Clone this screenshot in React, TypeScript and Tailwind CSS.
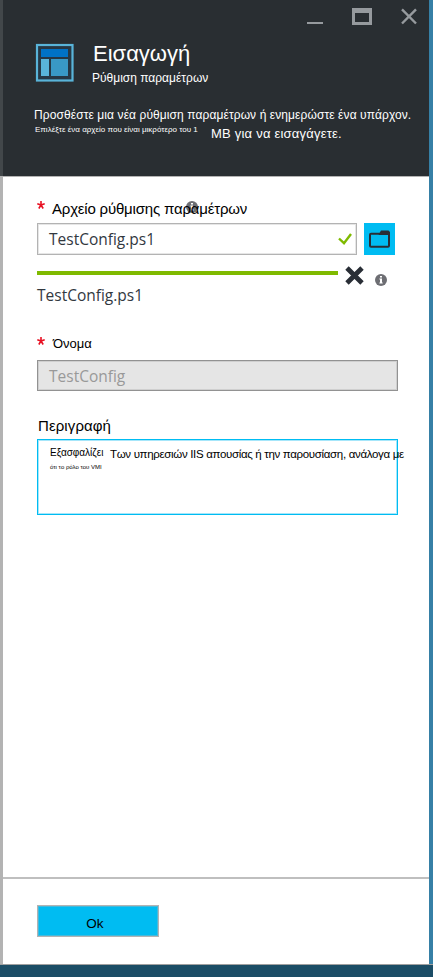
import React from "react";

function WindowControls() {
  return (
    <div className="flex h-[36px] items-start justify-end gap-[29px] pr-[12px] pt-[8px]">
      <span className="mt-[14px] h-[2px] w-[16px] bg-[#969a9e]" />
      <span className="h-[17px] w-[20px] border-[3px] border-t-[5px] border-[#969a9e]" />
      <svg className="h-[17px] w-[16px]" viewBox="0 0 16 17" fill="none" stroke="#969a9e" strokeWidth="2.4">
        <path d="M1 1.3 15 15.5M15 1.3 1 15.5" />
      </svg>
    </div>
  );
}

function SettingsLogo() {
  return (
    <svg className="mt-[7px] h-[39px] w-[39px] shrink-0" viewBox="0 0 39 39">
      <rect x="2" y="2" width="35.5" height="35.5" fill="#263744" stroke="#59b4d9" strokeWidth="2.2" />
      <rect x="6" y="6" width="27" height="8" fill="#0072c6" />
      <rect x="6" y="16" width="8" height="17" fill="#59b4d9" />
      <rect x="16" y="16" width="17" height="17" fill="#3999c6" />
    </svg>
  );
}

function Info({ className }: { className: string }) {
  return (
    <svg className={className} viewBox="0 0 12 12">
      <circle cx="6" cy="6" r="6" fill="#6d6e73" />
      <path d="M5 2h2v1.5H5zM4.4 4.6H7V8.6h.7v1H4.4v-1H5V5.6h-.6z" fill="#fff" />
    </svg>
  );
}

function Required({ className }: { className: string }) {
  return (
    <svg className={className} viewBox="0 0 8 8" stroke="#e81123" strokeWidth="1.6">
      <path d="M4 4V0M4 4 .3 2.8M4 4l3.7-1.2M4 4 1.8 7.5M4 4l2.2 3.5" />
    </svg>
  );
}

export default function App() {
  return (
    <div className="flex h-[977px] w-[433px] flex-col overflow-hidden whitespace-nowrap bg-[#1b4d66] font-['Liberation_Sans',Arial,sans-serif] text-black">
      <div className="flex h-[964px]">
        <div className="flex w-[3px] flex-col">
          <div className="h-[176px] bg-[#42474a]" />
          <div className="flex-1 bg-[#b3b3b3]" />
        </div>
        <div className="flex w-[426px] flex-col bg-white">
          <header className="h-[177px] border-b border-[#b3b3b3] bg-[#292e32] text-white">
            <WindowControls />
            <div className="flex h-[68px] pl-[32px]">
              <SettingsLogo />
              <div className="ml-[18px]">
                <h1 className="ml-px mt-[4px] h-[28px] text-[22px] leading-[28px]">Εισαγωγή</h1>
                <p className="mt-[2px] h-[16px] text-[12px] leading-[16px]">Ρύθμιση παραμέτρων</p>
              </div>
            </div>
            <p className="ml-[31px] mt-[3px] h-[16px] text-[12px] leading-[16px] tracking-[0.09px]">
              Προσθέστε μια νέα ρύθμιση παραμέτρων ή ενημερώστε ένα υπάρχον.
            </p>
            <div className="ml-[32px] flex">
              <p className="mt-px h-[12px] w-[176px] text-[8px] leading-[12px]">Επιλέξτε ένα αρχείο που είναι μικρότερο του 1</p>
              <p className="mt-[3px] h-[16px] text-[13px] leading-[16px] tracking-[0.22px]">MB για να εισαγάγετε.</p>
            </div>
          </header>

          <main className="h-[700px] pl-[34px] pt-[22px]">
            <div className="relative flex h-[24px]">
              <Required className="mt-[2px] h-[8px] w-[8px]" />
              <Info className="absolute left-[149px] top-[2px] h-[12px] w-[12px]" />
              <label className="relative ml-[7px] h-[20px] text-[15px] leading-[20px] tracking-[-0.19px]">Αρχείο ρύθμισης παραμέτρων</label>
            </div>
            <div className="flex h-[32px] gap-[7px]">
              <div className="flex w-[320px] items-center justify-between border border-[#b3b3b3] pl-[11px] pr-[4px] font-['Open_Sans','Noto_Sans',sans-serif] text-[15.5px] leading-[20px] text-[#32383f] shadow-[inset_0_0_0_1px_#e6e6e6]">
                <span>TestConfig.ps1</span>
                <svg className="h-[12px] w-[14px]" viewBox="0 0 14 12" fill="none" stroke="#7fba00" strokeWidth="2.4">
                  <path d="m1 5.5 5 4.7L13 1" />
                </svg>
              </div>
              <div className="flex w-[31px] items-center justify-center bg-[#00bcf2]">
                <svg className="h-[18px] w-[21px]" viewBox="0 0 21 18">
                  <rect x="1" y="3.7" width="19" height="13" rx="1" fill="#00bcf2" stroke="#292e36" strokeWidth="2" />
                  <path d="M10 4 12 .5h7.5L21 2v3H9.5z" fill="#292e36" />
                </svg>
              </div>
            </div>
            <div className="flex h-[30px] pt-[11px]">
              <div className="mt-[5px] h-[4px] w-[301px] bg-[#7fba00]" />
              <svg className="ml-[7px] h-[19px] w-[19px]" viewBox="0 0 19 19" stroke="#292e36" strokeWidth="4.8">
                <path d="m2 2 15 15M17 2 2 17" />
              </svg>
              <Info className="ml-[11px] mt-[8px] h-[12px] w-[12px]" />
            </div>
            <p className="h-[20px] font-['Open_Sans','Noto_Sans',sans-serif] text-[15.5px] leading-[20px] text-[#32383f]">TestConfig.ps1</p>

            <div className="mt-[30px] flex h-[25px]">
              <Required className="mt-[2px] h-[8px] w-[8px]" />
              <label className="ml-[8px] mt-px h-[16px] text-[13px] leading-[16px]">Όνομα</label>
            </div>
            <div className="flex h-[31px] w-[361px] items-center border border-[#929292] bg-[#e5e5e5] pl-[11px] font-['Open_Sans','Noto_Sans',sans-serif] text-[15.5px] leading-[20px] text-[#999] shadow-[inset_0_0_0_1px_#cfcfcf]">
              TestConfig
            </div>

            <label className="ml-px mt-[25px] block h-[23px] text-[15px] leading-[20px] tracking-[0.1px]">Περιγραφή</label>
            <div className="h-[76px] w-[361px] border border-[#00bcf2] pl-[12px] pt-[6px] shadow-[inset_0_0_0_1px_#a6e6fa]">
              <div className="flex h-[17px]">
                <span className="h-[14px] w-[60px] shrink-0 text-[10px] leading-[14px]">Εξασφαλίζει</span>
                <span className="h-[16px] text-[11.5px] leading-[16px] tracking-[-0.33px]">Των υπηρεσιών IIS απουσίας ή την παρουσίαση, ανάλογα με</span>
              </div>
              <p className="h-[8px] text-[6px] leading-[8px]">ότι το ρόλο του VMI</p>
            </div>
          </main>

          <footer className="h-[87px] border-t-2 border-[#bfbfbf] pl-[34px] pt-[26px]">
            <button className="block h-[32px] w-[122px] border border-[#b3b3b3] bg-[#00bcf2] pr-[6px] pt-[5px] text-center text-[13.5px] leading-[20px] shadow-[inset_0_0_0_1px_#45b9db]">Ok</button>
          </footer>
        </div>
        <div className="w-[4px] bg-[#3680a6]" />
      </div>
      <div className="h-px bg-[#a0a0a0]" />
    </div>
  );
}
